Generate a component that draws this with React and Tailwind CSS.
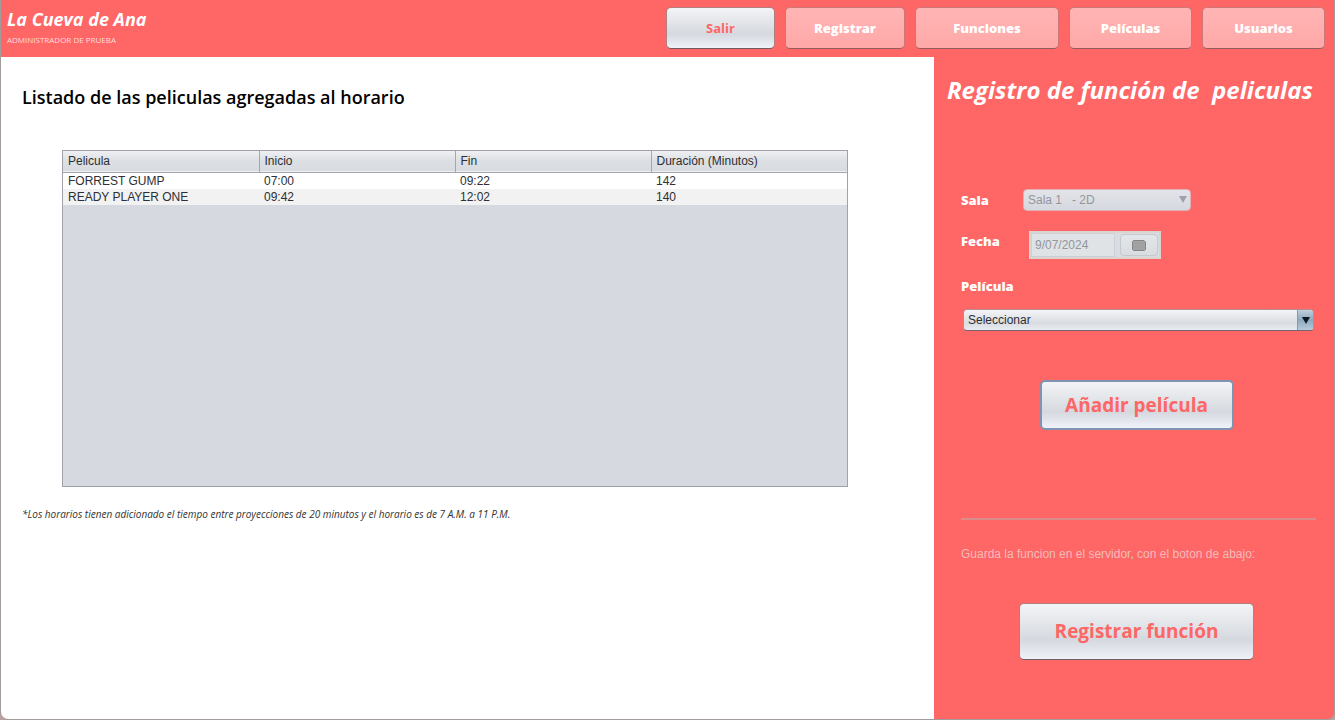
import { useState } from "react";

const NAV = [
  { label: "Registrar", width: "w-[120px]" },
  { label: "Funciones", width: "w-[144px]" },
  { label: "Películas", width: "w-[123px]" },
  { label: "Usuarios", width: "w-[123px]" },
];

const COLUMNS = ["Pelicula", "Inicio", "Fin", "Duración (Minutos)"];

const ROWS = [
  ["FORREST GUMP", "07:00", "09:22", "142"],
  ["READY PLAYER ONE", "09:42", "12:02", "140"],
];

const SILVER =
  "bg-linear-to-b from-[#f3f4f6] via-[#d5d9df] via-65% to-[#eff2f8] text-[#ff6666]";

function NavButton({ label, width }) {
  return (
    <button
      type="button"
      className={`h-[42px] rounded-[5px] border border-[#cf7676] border-b-[#955c5c] bg-linear-to-b from-[#ffb5b5] to-[#ffa8a8] pt-0.5 text-[13px] font-extrabold text-white ${width}`}
    >
      {label}
    </button>
  );
}

function Arrow({ className }) {
  return (
    <svg viewBox="0 0 8 7" className={className} aria-hidden="true">
      <path d="M0 0h8L4 7z" fill="currentColor" />
    </svg>
  );
}

function Header() {
  return (
    <header className="flex h-[57px] items-start justify-between bg-[#ff6666] pt-[7px] pr-[9px] pl-[6px]">
      <div>
        <p className="text-lg leading-6 font-bold text-white italic">La Cueva de Ana</p>
        <p className="text-[8px] leading-[18px] text-[#ffdcdc]">ADMINISTRADOR DE PRUEBA</p>
      </div>
      <nav className="flex gap-[10px]">
        <button
          type="button"
          className={`h-[42px] w-[109px] rounded-[5px] border border-[#b08080] border-b-[#6f5c62] pt-0.5 text-[13px] font-bold ${SILVER}`}
        >
          Salir
        </button>
        {NAV.map((item) => (
          <NavButton key={item.label} {...item} />
        ))}
      </nav>
    </header>
  );
}

function Schedule() {
  return (
    <main className="flex-1 bg-white pt-6 pr-[86px] pl-[21px]">
      <h1 className="text-lg leading-8 font-semibold text-black">
        Listado de las peliculas agregadas al horario
      </h1>
      <div className="mt-[37px] ml-10 h-[337px] border border-[#9fa3a9] bg-[#d6d9df] font-['Liberation_Sans',Arial,sans-serif]">
        <table className="w-full table-fixed border-collapse text-left text-xs text-[#2c2f33]">
          <thead>
            <tr className="h-[21px] border-b border-[#a2a6ad] bg-linear-to-b from-[#eff0f2] via-[#dcdfe3] to-[#d8dbe1]">
              {COLUMNS.map((name) => (
                <th key={name} className="border-r border-[#a2a6ad] px-[5px] leading-5 font-normal last:border-r-0">
                  {name}
                </th>
              ))}
            </tr>
          </thead>
          <tbody>
            {ROWS.map((row) => (
              <tr key={row[0]} className="h-4 bg-white even:bg-[#f2f2f2]">
                {row.map((cell) => (
                  <td key={cell} className="px-[5px] leading-4">
                    {cell}
                  </td>
                ))}
              </tr>
            ))}
          </tbody>
        </table>
      </div>
      <p className="mt-[18px] text-[10px] leading-[18px] text-[#333333] italic">
        *Los horarios tienen adicionado el tiempo entre proyecciones de 20 minutos y el horario es de 7 A.M. a 11 P.M.
      </p>
    </main>
  );
}

function FunctionForm() {
  const [movie, setMovie] = useState("");
  return (
    <aside className="w-[400px] shrink-0 bg-[#ff6666] pr-5 pl-[27px]">
      <h2 className="-mx-[14px] pt-[17px] text-2xl leading-8 font-bold whitespace-pre text-white italic">
        {"Registro de función de  peliculas"}
      </h2>
      <form onSubmit={(event) => event.preventDefault()}>
        <div className="mt-[83px] flex h-[22px] items-center">
          <label htmlFor="room" className="w-[62px] text-[13px] leading-5 font-extrabold text-white">
            Sala
          </label>
          <div className="relative">
            <select
              id="room"
              disabled
              className="block h-[22px] w-[168px] appearance-none rounded-[4px] border border-[#e0b0b5] bg-linear-to-b from-[#e2e4e8] to-[#d5d8e0] pl-1 font-['Liberation_Sans',Arial,sans-serif] text-xs leading-5 whitespace-pre text-[#92969d] opacity-100"
            >
              <option>{"Sala 1\u00a0\u00a0 - 2D"}</option>
            </select>
            <Arrow className="pointer-events-none absolute top-[7px] right-1 h-[7px] w-2 text-[#9da1b0]" />
          </div>
        </div>

        <div className="mt-5 flex h-7">
          <label htmlFor="date" className="w-[68px] text-[13px] leading-5 font-extrabold text-white">
            Fecha
          </label>
          <div className="flex w-[132px] border-2 border-[#dcd5cf] bg-[#d9dce1] font-['Liberation_Sans',Arial,sans-serif]">
            <input
              id="date"
              disabled
              defaultValue="9/07/2024"
              className="min-w-0 flex-1 border border-[#ccd0d7] bg-[#dfe3e6] px-[3px] text-xs text-[#92969d]"
            />
            <button
              type="button"
              disabled
              aria-label="Elegir fecha"
              className="m-px ml-[5px] flex w-[38px] items-center justify-center rounded-[4px] border border-[#c5c9cf] bg-linear-to-b from-[#e3e6e9] to-[#d9dce1]"
            >
              <svg viewBox="0 0 14 11" className="h-[11px] w-[14px]" aria-hidden="true">
                <path d="M1.5 0.5h10.5l1.5 1.5v7.5l-1 1h-11l-1-1v-8z" fill="#a3a3a3" stroke="#858585" />
                <path d="M1 3.5h12M4 3.5v6M7 3.5v6M10 3.5v6M1 7h12" stroke="#9c9c9c" strokeWidth="0.5" />
              </svg>
            </button>
          </div>
        </div>

        <label htmlFor="movie" className="mt-[17px] block text-[13px] leading-5 font-extrabold text-white">
          Película
        </label>
        <div className="relative mt-[13px] ml-0.5">
          <select
            id="movie"
            value={movie}
            onChange={(event) => setMovie(event.target.value)}
            className="block h-[22px] w-full appearance-none rounded-[4px] border border-[#b88b91] border-b-[#77636c] bg-linear-to-b from-[#f3f4f6] via-[#d9dde2] via-65% to-[#e8ebf1] pl-1 font-['Liberation_Sans',Arial,sans-serif] text-xs leading-5 text-[#2c2f33]"
          >
            <option value="">Seleccionar</option>
            {ROWS.map(([title]) => (
              <option key={title}>{title}</option>
            ))}
          </select>
          <span className="pointer-events-none absolute top-px right-px bottom-px flex w-4 items-center justify-center rounded-r-[3px] border-l border-[#8799ad] bg-linear-to-b from-[#c0cfdc] via-[#8fa9bf] to-[#b5cbdd] text-[#101820]">
            <Arrow className="h-[7px] w-2" />
          </span>
        </div>

        <div className="mt-[49px] flex justify-center pr-0.5">
          <button
            type="button"
            className={`h-[50px] w-[194px] rounded-[5px] border-2 border-[#7f93b2] text-[19px] font-bold ${SILVER}`}
          >
            Añadir película
          </button>
        </div>

        <hr className="mt-[88px] -mr-0.5 border-t-2 border-[#d88d8a]" />
        <p className="mt-6 font-['Liberation_Sans',Arial,sans-serif] text-xs leading-5 text-[#f3bcb9]">
          Guarda la funcion en el servidor, con el boton de abajo:
        </p>
        <div className="mt-[39px] flex justify-center pr-0.5">
          <button
            type="submit"
            className={`h-[57px] w-[235px] rounded-[5px] border border-[#b08080] border-b-[#6f5c62] text-[19px] font-bold ${SILVER}`}
          >
            Registrar función
          </button>
        </div>
      </form>
    </aside>
  );
}

export default function App() {
  return (
    <div className="min-h-screen bg-[#b9a3a0] font-['Open_Sans','Noto_Sans',sans-serif]">
      <div className="flex min-h-screen flex-col overflow-hidden rounded-b-lg border-x border-b border-[#a39a9c] bg-[#ff6666]">
        <Header />
        <div className="flex flex-1">
          <Schedule />
          <FunctionForm />
        </div>
      </div>
    </div>
  );
}
